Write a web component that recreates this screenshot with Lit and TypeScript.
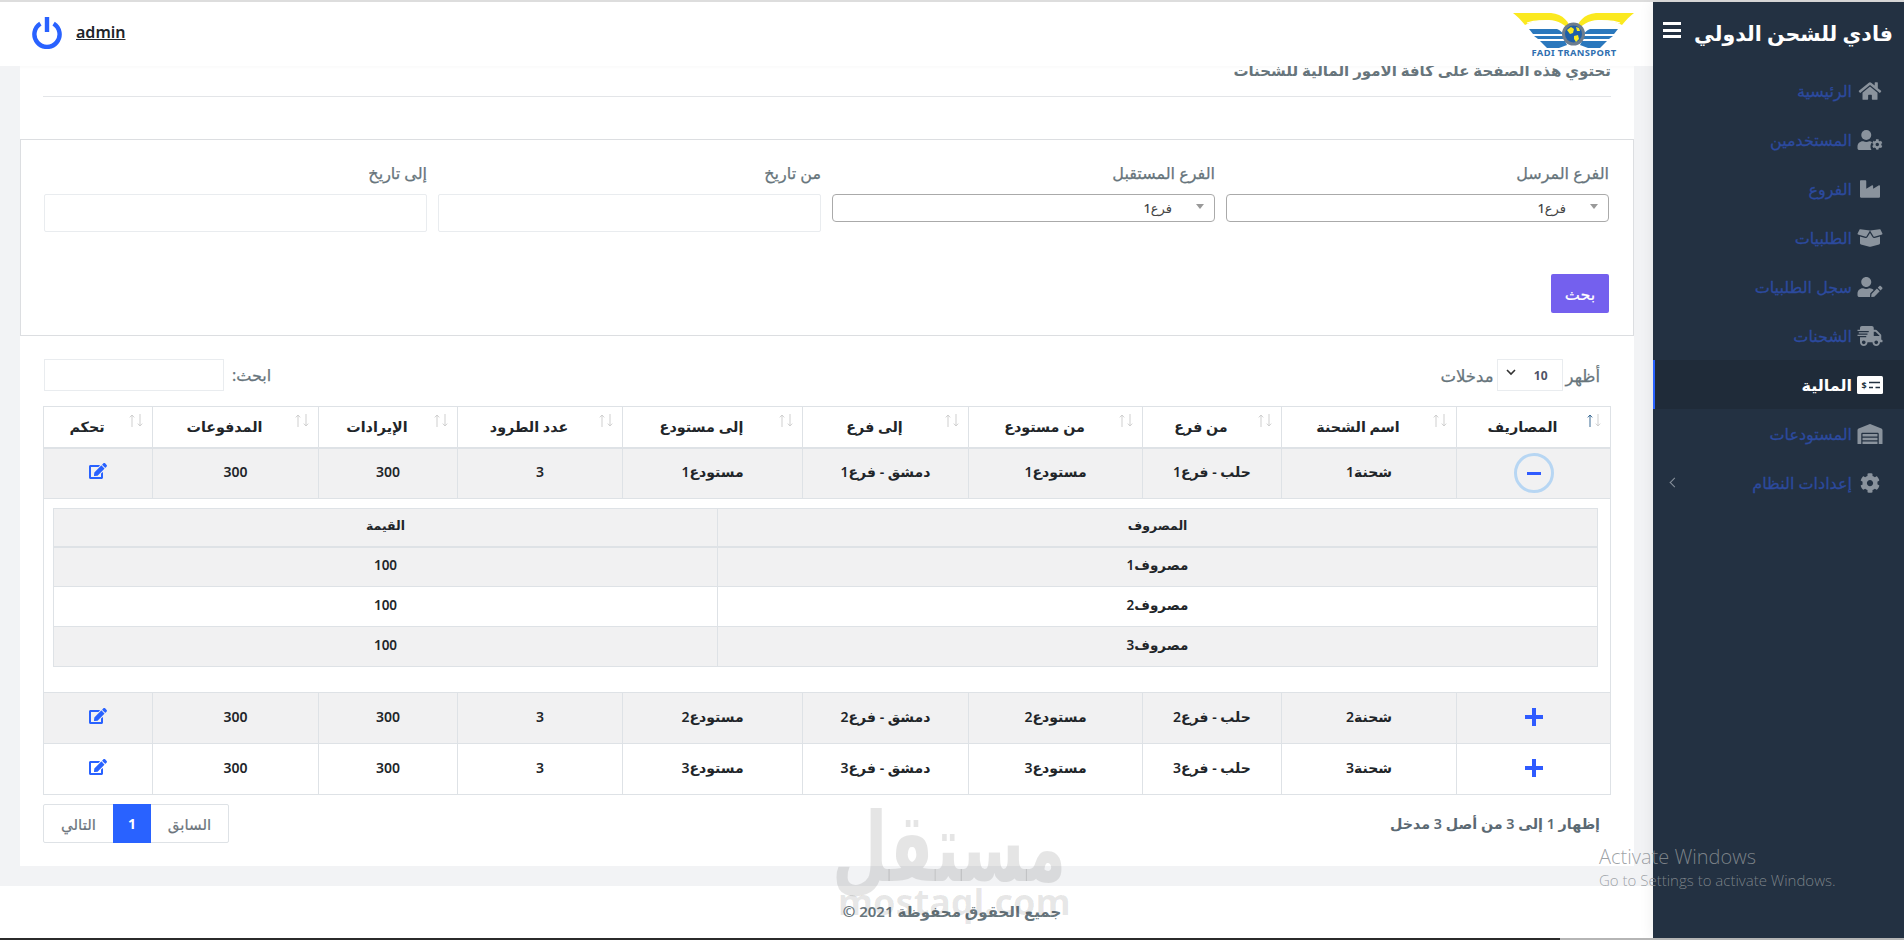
import { LitElement, html, css, svg } from "lit";
import { customElement } from "lit/decorators.js";

const FA = {
  home: ["0 0 576 512", "M280.37 148.26L96 300.11V464a16 16 0 0 0 16 16l112.06-.29a16 16 0 0 0 15.92-16V368a16 16 0 0 1 16-16h64a16 16 0 0 1 16 16v95.64a16 16 0 0 0 16 16.05L464 480a16 16 0 0 0 16-16V300L295.67 148.26a12.19 12.19 0 0 0-15.3 0zM571.6 251.47L488 182.56V44.05a12 12 0 0 0-12-12h-56a12 12 0 0 0-12 12v72.61L318.47 43a48 48 0 0 0-61 0L4.34 251.47a12 12 0 0 0-1.6 16.9l25.5 31A12 12 0 0 0 45.15 301l235.22-193.74a12.19 12.19 0 0 1 15.3 0L530.9 301a12 12 0 0 0 16.9-1.6l25.5-31a12 12 0 0 0-1.7-16.93z"],
  industry: ["0 0 512 512", "M475.115 163.781L336 252.309v-68.28c0-18.916-20.931-30.399-36.885-20.248L160 252.309V56c0-13.255-10.745-24-24-24H24C10.745 32 0 42.745 0 56v400c0 13.255 10.745 24 24 24h464c13.255 0 24-10.745 24-24V184.029c0-18.917-20.931-30.399-36.885-20.248z"],
  box: ["0 0 640 512", "M425.7 256c-16.9 0-32.8-9-41.4-23.4L320 126l-64.2 106.6c-8.7 14.5-24.6 23.5-41.5 23.5-4.5 0-9-.6-13.3-1.9L64 215v178c0 14.7 10 27.5 24.2 31l216.2 54.1c10.2 2.5 20.9 2.5 31 0L551.8 424c14.2-3.6 24.2-16.4 24.2-31V215l-137 39.1c-4.3 1.3-8.8 1.9-13.3 1.9zm212.6-112.2L586.8 41c-3.1-6.2-9.8-9.8-16.7-8.9L320 64l91.7 152.1c3.8 6.3 11.4 9.3 18.5 7.3l197.9-56.5c9.9-2.9 14.7-13.9 10.2-23.1zM53.2 41L1.7 143.8c-4.6 9.2.3 20.2 10.1 23l197.9 56.5c7.1 2 14.7-1 18.5-7.3L320 64 69.8 32.1c-6.9-.8-13.5 2.7-16.6 8.9z"],
  userEdit: ["0 0 640 512", "M224 256c70.7 0 128-57.3 128-128S294.7 0 224 0 96 57.3 96 128s57.3 128 128 128zm89.6 32h-16.7c-22.2 10.2-46.9 16-72.9 16s-50.6-5.8-72.9-16h-16.7C60.2 288 0 348.2 0 422.4V464c0 26.5 21.5 48 48 48h274.9c-2.4-6.8-3.4-14-2.6-21.3l6.8-60.9 1.2-11.1 7.9-7.9 77.3-77.3c-24.5-27.7-60-45.5-99.9-45.5zm45.3 145.3l-6.8 61c-1.1 10.2 7.5 18.8 17.6 17.6l60.9-6.8 137.9-137.9-71.7-71.7-137.9 137.8zM633 268.9L595.1 231c-9.3-9.3-24.5-9.3-33.8 0l-37.8 37.8-4.1 4.1 71.8 71.7 41.8-41.8c9.3-9.4 9.3-24.5 0-33.9z"],
  truck: ["0 0 640 512", "M624 352h-16V243.9c0-12.7-5.1-24.9-14.1-33.9L494 110.1c-9-9-21.2-14.1-33.9-14.1H416V48c0-26.5-21.5-48-48-48H112C85.5 0 64 21.5 64 48v48H8c-4.4 0-8 3.6-8 8v16c0 4.4 3.6 8 8 8h272c4.4 0 8 3.6 8 8v16c0 4.4-3.6 8-8 8H40c-4.4 0-8 3.6-8 8v16c0 4.4 3.6 8 8 8h208c4.4 0 8 3.6 8 8v16c0 4.4-3.6 8-8 8H8c-4.4 0-8 3.6-8 8v16c0 4.4 3.6 8 8 8h208c4.4 0 8 3.6 8 8v16c0 4.4-3.6 8-8 8H64v128c0 53 43 96 96 96s96-43 96-96h128c0 53 43 96 96 96s96-43 96-96h48c8.8 0 16-7.2 16-16v-32c0-8.8-7.2-16-16-16zM160 464c-26.5 0-48-21.5-48-48s21.5-48 48-48 48 21.5 48 48-21.5 48-48 48zm320 0c-26.5 0-48-21.5-48-48s21.5-48 48-48 48 21.5 48 48-21.5 48-48 48zm80-208H416V144h44.1l99.9 99.9V256z"],
  warehouse: ["0 0 640 512", "M504 352H136.4c-4.4 0-8 3.6-8 8l-.1 48c0 4.4 3.6 8 8 8H504c4.4 0 8-3.6 8-8v-48c0-4.4-3.6-8-8-8zm0 96H136.1c-4.4 0-8 3.6-8 8l-.1 48c0 4.4 3.6 8 8 8h368c4.4 0 8-3.6 8-8v-48c0-4.4-3.6-8-8-8zm0-192H136.6c-4.4 0-8 3.6-8 8l-.1 48c0 4.4 3.6 8 8 8H504c4.4 0 8-3.6 8-8v-48c0-4.4-3.6-8-8-8zm106.5-139L338.4 3.7a48.15 48.15 0 0 0-36.9 0L29.5 117C11.7 124.5 0 141.9 0 161.3V504c0 4.4 3.6 8 8 8h80c4.4 0 8-3.6 8-8V256c0-17.6 14.6-32 32.6-32h382.8c18 0 32.6 14.4 32.6 32v248c0 4.4 3.6 8 8 8h80c4.4 0 8-3.6 8-8V161.3c0-19.4-11.7-36.8-29.5-44.3z"],
  cog: ["0 0 512 512", "M487.4 315.7l-42.6-24.6c4.3-23.2 4.3-47 0-70.2l42.6-24.6c4.9-2.8 7.1-8.6 5.5-14-11.1-35.6-30-67.8-54.7-94.6-3.8-4.1-10-5.1-14.8-2.3L380.8 110c-17.9-15.4-38.5-27.3-60.8-35.1V25.8c0-5.6-3.9-10.5-9.4-11.7-36.7-8.2-74.3-7.8-109.2 0-5.5 1.2-9.4 6.1-9.4 11.7V75c-22.2 7.9-42.8 19.8-60.8 35.1L88.7 85.5c-4.9-2.8-11-1.9-14.8 2.3-24.7 26.7-43.6 58.9-54.7 94.6-1.7 5.4.6 11.2 5.5 14L67.3 221c-4.3 23.2-4.3 47 0 70.2l-42.6 24.6c-4.9 2.8-7.1 8.6-5.5 14 11.1 35.6 30 67.8 54.7 94.6 3.8 4.1 10 5.1 14.8 2.3l42.6-24.6c17.9 15.4 38.5 27.3 60.8 35.1v49.2c0 5.6 3.9 10.5 9.4 11.7 36.7 8.2 74.3 7.8 109.2 0 5.5-1.2 9.4-6.1 9.4-11.7v-49.2c22.2-7.9 42.8-19.8 60.8-35.1l42.6 24.6c4.9 2.8 11 1.9 14.8-2.3 24.7-26.7 43.6-58.9 54.7-94.6 1.5-5.5-.7-11.3-5.6-14.1zM256 336c-44.1 0-80-35.9-80-80s35.9-80 80-80 80 35.9 80 80-35.9 80-80 80z"],
  edit: ["0 0 576 512", "M402.6 83.2l90.2 90.2c3.8 3.8 3.8 10 0 13.8L274.4 405.6l-92.8 10.3c-12.4 1.4-22.9-9.1-21.5-21.5l10.3-92.8L388.8 83.2c3.8-3.8 10-3.8 13.8 0zm162-22.9l-48.8-48.8c-15.2-15.2-39.9-15.2-55.2 0l-35.4 35.4c-3.8 3.8-3.8 10 0 13.8l90.2 90.2c3.8 3.8 10 3.8 13.8 0l35.4-35.4c15.2-15.3 15.2-40 0-55.2zM384 346.2V448H64V128h229.8c3.2 0 6.2-1.3 8.5-3.5l40-40c7.6-7.6 2.2-20.5-8.5-20.5H48C21.5 64 0 85.5 0 112v352c0 26.5 21.5 48 48 48h352c26.5 0 48-21.5 48-48V306.2c0-10.7-12.9-16-20.5-8.5l-40 40c-2.2 2.3-3.5 5.3-3.5 8.5z"],
};

const faIcon = (k: keyof typeof FA) => html`<svg viewBox=${FA[k][0]} fill="currentColor"><path d=${FA[k][1]}></path></svg>`;

const userCog = html`<svg viewBox="0 0 640 512" fill="currentColor">
  <circle cx="224" cy="128" r="128"></circle>
  <path d="M313.6 288h-16.7c-22.2 10.2-46.9 16-72.9 16s-50.6-5.8-72.9-16h-16.7C60.2 288 0 348.2 0 422.4V464c0 26.5 21.5 48 48 48h310c-14-20-26-46-26-88 0-50 16-90 44-112-18-15-42-24-62.4-24z"></path>
  <g transform="translate(368 232) scale(.54)"><path d=${FA.cog[1]}></path></g>
</svg>`;

const moneyCheck = html`<svg viewBox="0 0 26 18">
  <rect width="26" height="18" rx="1.5" fill="#fff"></rect>
  <text x="7" y="12.5" font-size="9" font-weight="700" text-anchor="middle" fill="#223140" font-family="Noto Sans">$</text>
  <path d="M12 6.5h11M12 11.5h4M18.5 11.5h4.5" stroke="#223140" stroke-width="1.3"></path>
</svg>`;

const wing = svg`
  <path d="M0 1H38C50 2 57 10 58 20C53 13 45 8 36 8C25 8 17 10 12 13C8 8 4 4 0 1Z" fill="#fbe91f"></path>
  <path d="M14 11C26 7 42 8 52 20" fill="none" stroke="#fff" stroke-width="1.2"></path>
  <path d="M16 17H44C47 18 49 20 50 22H20Z" fill="#2b78bd"></path>
  <path d="M21 24H50L51 27H25Z" fill="#2b78bd"></path>
  <path d="M27 29H52L54 33L46 36H34Z" fill="#2b78bd"></path>
`;

const logo = html`<svg class="logo" viewBox="0 0 122 46" width="122" height="46">
  ${wing}
  <g transform="translate(121 0) scale(-1 1)">${wing}</g>
  <circle cx="60.5" cy="22" r="10" fill="#1f5fa8" stroke="#6d7d8e" stroke-width="3"></circle>
  <path d="M54 18l4-3 3 2-1 4-3 1zM61 24l4-1 1 4-3 3-2-3zM63 15l3 1 1 3-3 0z" fill="#fbe91f"></path>
  <text x="61" y="44" text-anchor="middle" font-size="9.4" font-weight="700" fill="#2f6fb0" font-family="Noto Sans" letter-spacing=".35">FADI TRANSPORT</text>
</svg>`;

const NAV = [
  { label: "الرئيسية", icon: faIcon("home") },
  { label: "المستخدمين", icon: userCog },
  { label: "الفروع", icon: faIcon("industry") },
  { label: "الطلبيات", icon: faIcon("box") },
  { label: "سجل الطلبيات", icon: faIcon("userEdit") },
  { label: "الشحنات", icon: faIcon("truck") },
  { label: "المالية", icon: moneyCheck, active: true },
  { label: "المستودعات", icon: faIcon("warehouse") },
  { label: "إعدادات النظام", icon: faIcon("cog"), more: true },
];

const COLS = ["المصاريف", "اسم الشحنة", "من فرع", "من مستودع", "إلى فرع", "إلى مستودع", "عدد الطرود", "الإيرادات", "المدفوعات", "تحكم"];
const COL_WIDTHS = [154, 175, 139, 174, 166, 180, 165, 139, 166, 109];

@customElement("app-root")
export class AppRoot extends LitElement {
  static styles = css`
    :host {
      display: block;
      height: 940px;
      overflow: hidden;
      font-family: "Noto Sans", "DejaVu Sans", sans-serif;
      color: #67757c;
      font-size: 14px;
    }
    * {
      box-sizing: border-box;
    }
    .shell {
      position: relative;
      display: flex;
      height: 940px;
      padding: 2px 0;
      background: #fff;
    }
    .shell::before {
      content: "";
      position: absolute;
      top: 0;
      left: 0;
      right: 0;
      height: 2px;
      background: #ddd;
    }
    .scrollbar {
      position: absolute;
      left: 0;
      right: 0;
      bottom: 0;
      height: 2px;
      background: #2b2b2b;
      z-index: 5;
    }
    .scrollbar i {
      display: block;
      width: 344px;
      height: 2px;
      margin-left: 48px;
      background: #b5b5b5;
    }
    .sidebar {
      width: 251px;
      flex: none;
      background: #233142;
      box-shadow: 0 0 14px rgba(0, 0, 0, 0.08);
      z-index: 3;
    }
    .brand {
      height: 64px;
      display: flex;
      align-items: center;
      justify-content: space-between;
      padding: 0 11px 2px 10px;
      color: #fff;
      font-size: 20.5px;
      font-weight: 700;
      white-space: nowrap;
    }
    .burger {
      width: 18px;
      height: 16px;
      margin-bottom: 6px;
      border-top: 3px solid #fff;
      border-bottom: 3px solid #fff;
      position: relative;
    }
    .burger::after {
      content: "";
      position: absolute;
      left: 0;
      right: 0;
      top: 3.5px;
      height: 3px;
      background: #fff;
    }
    .nav-item {
      height: 49px;
      display: flex;
      align-items: center;
      gap: 5px;
      padding: 0 21px 0 18px;
      color: #2c4a9e;
      font-size: 16px;
      -webkit-text-stroke: 0.3px currentColor;
    }
    .nav-item svg {
      width: 26px;
      height: 20px;
      flex: none;
      color: #8a939d;
    }
    .nav-item.active {
      background: #1f2b39;
      border-left: 2px solid #2962ff;
      padding-left: 16px;
      color: #fff;
      font-weight: 700;
      -webkit-text-stroke: 0;
    }
    .nav-item.active svg {
      height: 18px;
    }
    .chev {
      margin-right: auto;
      width: 7px;
      height: 7px;
      border-left: 1px solid #8a939d;
      border-bottom: 1px solid #8a939d;
      transform: rotate(45deg);
    }
    .main {
      flex: 1;
      min-width: 0;
      display: flex;
      flex-direction: column;
      background: #f2f3f5;
    }
    .topbar {
      position: relative;
      z-index: 2;
      height: 64px;
      flex: none;
      background: #fff;
      display: flex;
      align-items: center;
      justify-content: space-between;
      padding: 0 18px 0 31px;
    }
    .logo {
      margin-top: 1px;
    }
    .user {
      display: flex;
      direction: ltr;
      align-items: center;
      gap: 13px;
      margin-bottom: 3px;
    }
    .user svg {
      width: 32px;
      height: 32px;
    }
    .user a {
      color: #212529;
      font-size: 16px;
      font-weight: 600;
      text-decoration: underline;
      margin-bottom: 1px;
    }
    .content {
      flex: 1;
      padding: 0 19px 20px 20px;
    }
    .card {
      height: 800px;
      background: #fff;
      box-shadow: inset 0 4px 3px -2px rgba(0, 0, 0, 0.02);
    }
    .page-head {
      display: flow-root;
      margin: 0 23px;
      height: 31px;
      border-bottom: 1px solid #e3e5e8;
    }
    .page-head p {
      margin: -6px 0 0;
      height: 20px;
      line-height: 20px;
      font-size: 15px;
      font-weight: 600;
    }
    .filter {
      margin-top: 42px;
      height: 197px;
      border: 1px solid #dcdee1;
      padding: 22px 24px 0 22px;
    }
    .filter-grid {
      display: grid;
      grid-template-columns: repeat(4, 383px);
      gap: 11px;
    }
    label {
      display: block;
      height: 32px;
      line-height: 22px;
      font-size: 16px;
      -webkit-text-stroke: 0.25px currentColor;
    }
    .sel2 {
      height: 28px;
      border: 1px solid #aaa;
      border-radius: 4px;
      display: flex;
      align-items: center;
      color: #444;
      font-size: 13px;
      font-weight: 500;
      padding: 0 10px 0 0;
      gap: 24px;
    }
    .sel2 i {
      width: 0;
      height: 0;
      border: 4px solid transparent;
      border-top: 5px solid #999;
      border-bottom: 0;
      margin-bottom: 3px;
    }
    .date {
      height: 38px;
      border: 1px solid #e9ecef;
      border-radius: 2px;
      background: #fff;
    }
    .btn {
      display: flex;
      align-items: center;
      justify-content: center;
      width: 58px;
      height: 39px;
      border-radius: 2px;
      background: #7460ee;
      color: #fff;
      font-size: 16px;
      -webkit-text-stroke: 0.2px currentColor;
    }
    .filter-foot {
      margin-top: 42px;
    }
    .dt-top {
      margin: 23px 23px 15px 24px;
      height: 32px;
      display: flex;
      justify-content: space-between;
      align-items: center;
    }
    .len {
      display: flex;
      align-items: center;
      gap: 3px;
      padding-right: 11px;
      font-size: 16.5px;
      -webkit-text-stroke: 0.25px currentColor;
    }
    .len-box {
      width: 66px;
      height: 32px;
      border: 1px solid #e9ecef;
      display: flex;
      align-items: center;
      justify-content: space-between;
      padding: 0 14px 0 8px;
      color: #4f5467;
      font-size: 12px;
      font-weight: 700;
      -webkit-text-stroke: 0;
    }
    .len-box svg {
      width: 10px;
      height: 7px;
      margin-bottom: 6px;
    }
    .search {
      display: flex;
      align-items: center;
      gap: 8px;
      font-size: 16px;
      -webkit-text-stroke: 0.25px currentColor;
    }
    .search div {
      width: 180px;
      height: 32px;
      border: 1px solid #e9ecef;
    }
    table {
      border-collapse: collapse;
      table-layout: fixed;
    }
    .dt {
      width: 1567px;
      margin-right: 23px;
      color: #212529;
      font-size: 14px;
      font-weight: 600;
      text-align: center;
    }
    .dt > thead > tr > th,
    .dt > tbody > tr > td {
      border: 1px solid #dee2e6;
      padding: 0;
    }
    .dt > thead > tr > th {
      position: relative;
      height: 41px;
      border-bottom-width: 2px;
      padding-right: 22px;
      font-weight: 600;
      font-size: 14.3px;
    }
    .sort {
      position: absolute;
      right: 9px;
      top: 7px;
      width: 14px;
      height: 13px;
      color: #cfcfcf;
    }
    .sort.on .up {
      color: #3a6a94;
    }
    .dt > tbody > tr.row > td {
      height: 51px;
      padding-bottom: 3px;
    }
    .striped {
      background: #f1f1f2;
    }
    .dt > tbody > tr > td.child {
      height: 194px;
      vertical-align: top;
      padding: 9px 12px 0 9px;
    }
    .nested {
      width: 1544px;
      font-size: 13.5px;
      font-weight: 600;
    }
    .nested th,
    .nested td {
      border: 1px solid #dee2e6;
      padding: 0 0 3px;
      height: 40px;
    }
    .nested th {
      height: 38px;
      border-bottom-width: 2px;
      font-size: 12.5px;
      font-weight: 600;
      background: #f1f1f2;
    }
    .minus {
      display: flex;
      align-items: center;
      justify-content: center;
      width: 40px;
      height: 40px;
      margin: 3px auto 0;
      border: 3px solid #b7d6f3;
      border-radius: 50%;
    }
    .minus i {
      width: 14px;
      height: 3px;
      background: #2f5bff;
    }
    .plus {
      display: block;
      width: 18px;
      height: 18px;
      margin: 0 auto;
      background: linear-gradient(#2f5bff, #2f5bff) center / 18px 4px no-repeat,
        linear-gradient(#2f5bff, #2f5bff) center / 4px 18px no-repeat;
    }
    .edit {
      display: block;
      width: 18px;
      height: 16px;
      margin: -2px auto 0;
      color: #2962ff;
    }
    .edit svg {
      display: block;
      width: 18px;
      height: 16px;
    }
    .dt-foot {
      margin: 9px 23px 0 23px;
      display: flex;
      justify-content: space-between;
      align-items: center;
    }
    .info {
      padding-right: 11px;
      font-size: 14.3px;
      font-weight: 600;
      color: #5b6973;
    }
    .pager {
      display: flex;
      height: 39px;
      border: 1px solid #dee2e6;
      border-radius: 2px;
      font-size: 15px;
      color: #6c757d;
      -webkit-text-stroke: 0.2px currentColor;
    }
    .pager span {
      display: flex;
      align-items: center;
      justify-content: center;
    }
    .pager .prev {
      width: 77px;
    }
    .pager .cur {
      width: 38px;
      margin: -1px 0;
      background: #2962ff;
      color: #fff;
      font-weight: 700;
      font-size: 14px;
      -webkit-text-stroke: 0;
    }
    .pager .next {
      width: 69px;
    }
    footer {
      height: 52px;
      flex: none;
      background: #fff;
      display: flex;
      align-items: center;
      justify-content: center;
      padding-left: 251px;
      padding-bottom: 2px;
      font-size: 15px;
      font-weight: 600;
    }
    .watermark {
      position: absolute;
      left: 838px;
      top: 806px;
      width: 228px;
      text-align: center;
      color: rgba(0, 0, 0, 0.1);
      z-index: 4;
      pointer-events: none;
    }
    .wm-ar {
      height: 78px;
      font-size: 64px;
      line-height: 78px;
      font-weight: 700;
      white-space: nowrap;
      transform: scaleY(1.5);
    }
    .wm-en {
      margin-top: -4px;
      direction: ltr;
      font-size: 36px;
      line-height: 44px;
      font-weight: 700;
      white-space: nowrap;
    }
    .activate {
      position: absolute;
      left: 1599px;
      top: 843px;
      direction: ltr;
      font-family: "Open Sans", sans-serif;
      font-weight: 300;
      color: rgba(140, 145, 150, 0.85);
      z-index: 6;
      pointer-events: none;
      white-space: nowrap;
    }
    .activate div:first-child {
      font-size: 20px;
      line-height: 28px;
    }
    .activate div:last-child {
      font-size: 15px;
      line-height: 20px;
      margin-top: -1px;
    }
  `;

  sortIcon(on: boolean) {
    return html`<svg class="sort ${on ? "on" : ""}" viewBox="0 0 14 13" fill="none" stroke="currentColor" stroke-width="1">
      <path class="up" d="M3 13V1M.8 3.4L3 1l2.2 2.4"></path>
      <path d="M11 0v12M8.8 9.6L11 12l2.2-2.4"></path>
    </svg>`;
  }

  renderRow(n: number, striped: boolean, open: boolean) {
    return html`<tr class="row ${striped ? "striped" : ""}">
      <td>${open ? html`<span class="minus"><i></i></span>` : html`<span class="plus"></span>`}</td>
      <td>شحنة${n}</td>
      <td>حلب - فرع${n}</td>
      <td>مستودع${n}</td>
      <td>دمشق - فرع${n}</td>
      <td>مستودع${n}</td>
      <td>3</td>
      <td>300</td>
      <td>300</td>
      <td><span class="edit">${faIcon("edit")}</span></td>
    </tr>`;
  }

  render() {
    return html`
      <div class="shell" dir="rtl">
        <aside class="sidebar">
          <div class="brand"><span>فادي للشحن الدولي</span><span class="burger"></span></div>
          <nav>
            ${NAV.map(
              (n) => html`<div class="nav-item ${n.active ? "active" : ""}">
                ${n.icon}<span>${n.label}</span>${n.more ? html`<i class="chev"></i>` : ""}
              </div>`
            )}
          </nav>
        </aside>
        <div class="main">
          <header class="topbar">
            ${logo}
            <div class="user">
              <svg viewBox="0 0 32 32" fill="none" stroke="#2962ff" stroke-width="4.4">
                <path d="M9.4 6.6a12.6 12.6 0 1 0 13.2 0"></path>
                <path d="M16 0v15"></path>
              </svg>
              <a>admin</a>
            </div>
          </header>
          <div class="content">
            <div class="card">
              <div class="page-head"><p>تحتوي هذه الصفحة على كافة الأمور المالية للشحنات</p></div>
              <section class="filter">
                <div class="filter-grid">
                  <div><label>الفرع المرسل</label><div class="sel2"><i></i><span>فرع1</span></div></div>
                  <div><label>الفرع المستقبل</label><div class="sel2"><i></i><span>فرع1</span></div></div>
                  <div><label>من تاريخ</label><div class="date"></div></div>
                  <div><label>إلى تاريخ</label><div class="date"></div></div>
                </div>
                <div class="filter-foot"><div class="btn">بحث</div></div>
              </section>
              <div class="dt-top">
                <div class="len">
                  <span>أظهر</span>
                  <div class="len-box">
                    <span>10</span>
                    <svg viewBox="0 0 10 7" fill="none" stroke="#333" stroke-width="1.6"><path d="M1 1l4 4 4-4"></path></svg>
                  </div>
                  <span>مدخلات</span>
                </div>
                <div class="search"><span>ابحث:</span><div></div></div>
              </div>
              <table class="dt">
                <colgroup>${COL_WIDTHS.map((w) => html`<col style="width:${w}px" />`)}</colgroup>
                <thead>
                  <tr>${COLS.map((c, i) => html`<th>${c}${this.sortIcon(i === 0)}</th>`)}</tr>
                </thead>
                <tbody>
                  ${this.renderRow(1, true, true)}
                  <tr>
                    <td class="child" colspan="10">
                      <table class="nested">
                        <colgroup><col style="width:880px" /><col style="width:664px" /></colgroup>
                        <thead><tr><th>المصروف</th><th>القيمة</th></tr></thead>
                        <tbody>
                          <tr class="striped"><td>مصروف1</td><td>100</td></tr>
                          <tr><td>مصروف2</td><td>100</td></tr>
                          <tr class="striped"><td>مصروف3</td><td>100</td></tr>
                        </tbody>
                      </table>
                    </td>
                  </tr>
                  ${this.renderRow(2, true, false)} ${this.renderRow(3, false, false)}
                </tbody>
              </table>
              <div class="dt-foot">
                <div class="info">إظهار 1 إلى 3 من أصل 3 مدخل</div>
                <div class="pager">
                  <span class="prev">السابق</span><span class="cur">1</span><span class="next">التالي</span>
                </div>
              </div>
            </div>
          </div>
          <footer>جميع الحقوق محفوظة 2021 ©</footer>
        </div>
        <div class="watermark">
          <div class="wm-ar">مستقل</div>
          <div class="wm-en">mostaql.com</div>
        </div>
        <div class="activate">
          <div>Activate Windows</div>
          <div>Go to Settings to activate Windows.</div>
        </div>
        <div class="scrollbar"><i></i></div>
      </div>
    `;
  }
}
